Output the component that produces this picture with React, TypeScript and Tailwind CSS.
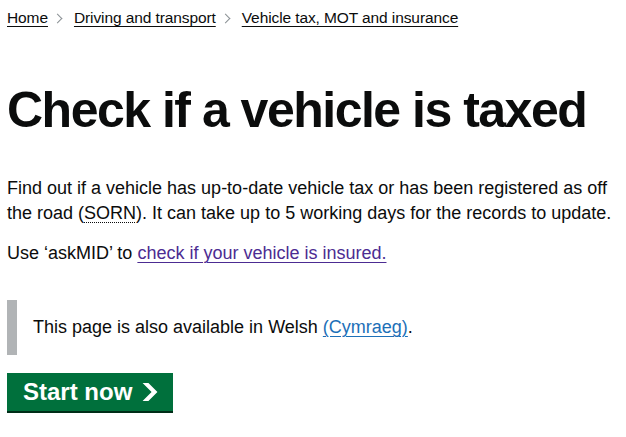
function Chevron() {
  return <span className="ml-[6px] mr-[13px] inline-block h-[7px] w-[7px] rotate-45 border-t border-r border-[#8a9094]" aria-hidden="true" />
}

export default function App() {
  const font = { fontFamily: '"Liberation Sans", Arial, sans-serif' }
  return (
    <div className="min-h-screen bg-white pl-[7px] text-[#0b0c0c]" style={font}>
      <nav className="pt-[8px] text-[15.5px] leading-[20px] tracking-[-0.1px]">
        <ol className="flex items-center">
          <li>
            <a href="#" className="underline underline-offset-[3px] decoration-1">Home</a>
          </li>
          <li className="flex items-center">
            <Chevron />
            <a href="#" className="underline underline-offset-[3px] decoration-1">Driving and transport</a>
          </li>
          <li className="flex items-center">
            <Chevron />
            <a href="#" className="underline underline-offset-[3px] decoration-1">Vehicle tax, MOT and insurance</a>
          </li>
        </ol>
      </nav>

      <h1 className="mt-[57px] text-[50px] font-bold leading-[50px] tracking-[-1.5px]">Check if a vehicle is taxed</h1>

      <p className="mt-[41px] text-[18px] leading-[25px]">
        Find out if a vehicle has up-to-date vehicle tax or has been registered as off the road (
        <abbr title="Statutory Off Road Notification" className="underline decoration-dotted decoration-1 underline-offset-[3px]">SORN</abbr>
        ). It can take up to 5 working days for the records to update.
      </p>
      <p className="mt-[15px] text-[18px] leading-[25px]">
        Use ‘askMID’ to{" "}
        <a href="#" className="text-[#4c2c92] underline underline-offset-[3px] decoration-1">check if your vehicle is insured.</a>
      </p>

      <div className="mt-[34px] mr-[7px] border-l-[10px] border-[#b1b4b6] py-[15px] pl-[16px] text-[18px] leading-[25px]">
        This page is also available in Welsh{" "}
        <a href="#" className="text-[#1d70b8] underline underline-offset-[3px] decoration-1">(Cymraeg)</a>.
      </div>

      <a
        href="#"
        className="mt-[18px] inline-flex items-center gap-[10px] bg-[#00703c] pl-[16px] pr-[15px] pt-[5px] pb-[5px] text-[24px] font-bold leading-[28px] text-white shadow-[0_2px_0_#002d18]"
      >
        Start now
        <svg width="16" height="18" viewBox="0 0 33 40" aria-hidden="true">
          <path fill="currentColor" d="M0 0h13l20 20-20 20H0l20-20z" />
        </svg>
      </a>
    </div>
  )
}
